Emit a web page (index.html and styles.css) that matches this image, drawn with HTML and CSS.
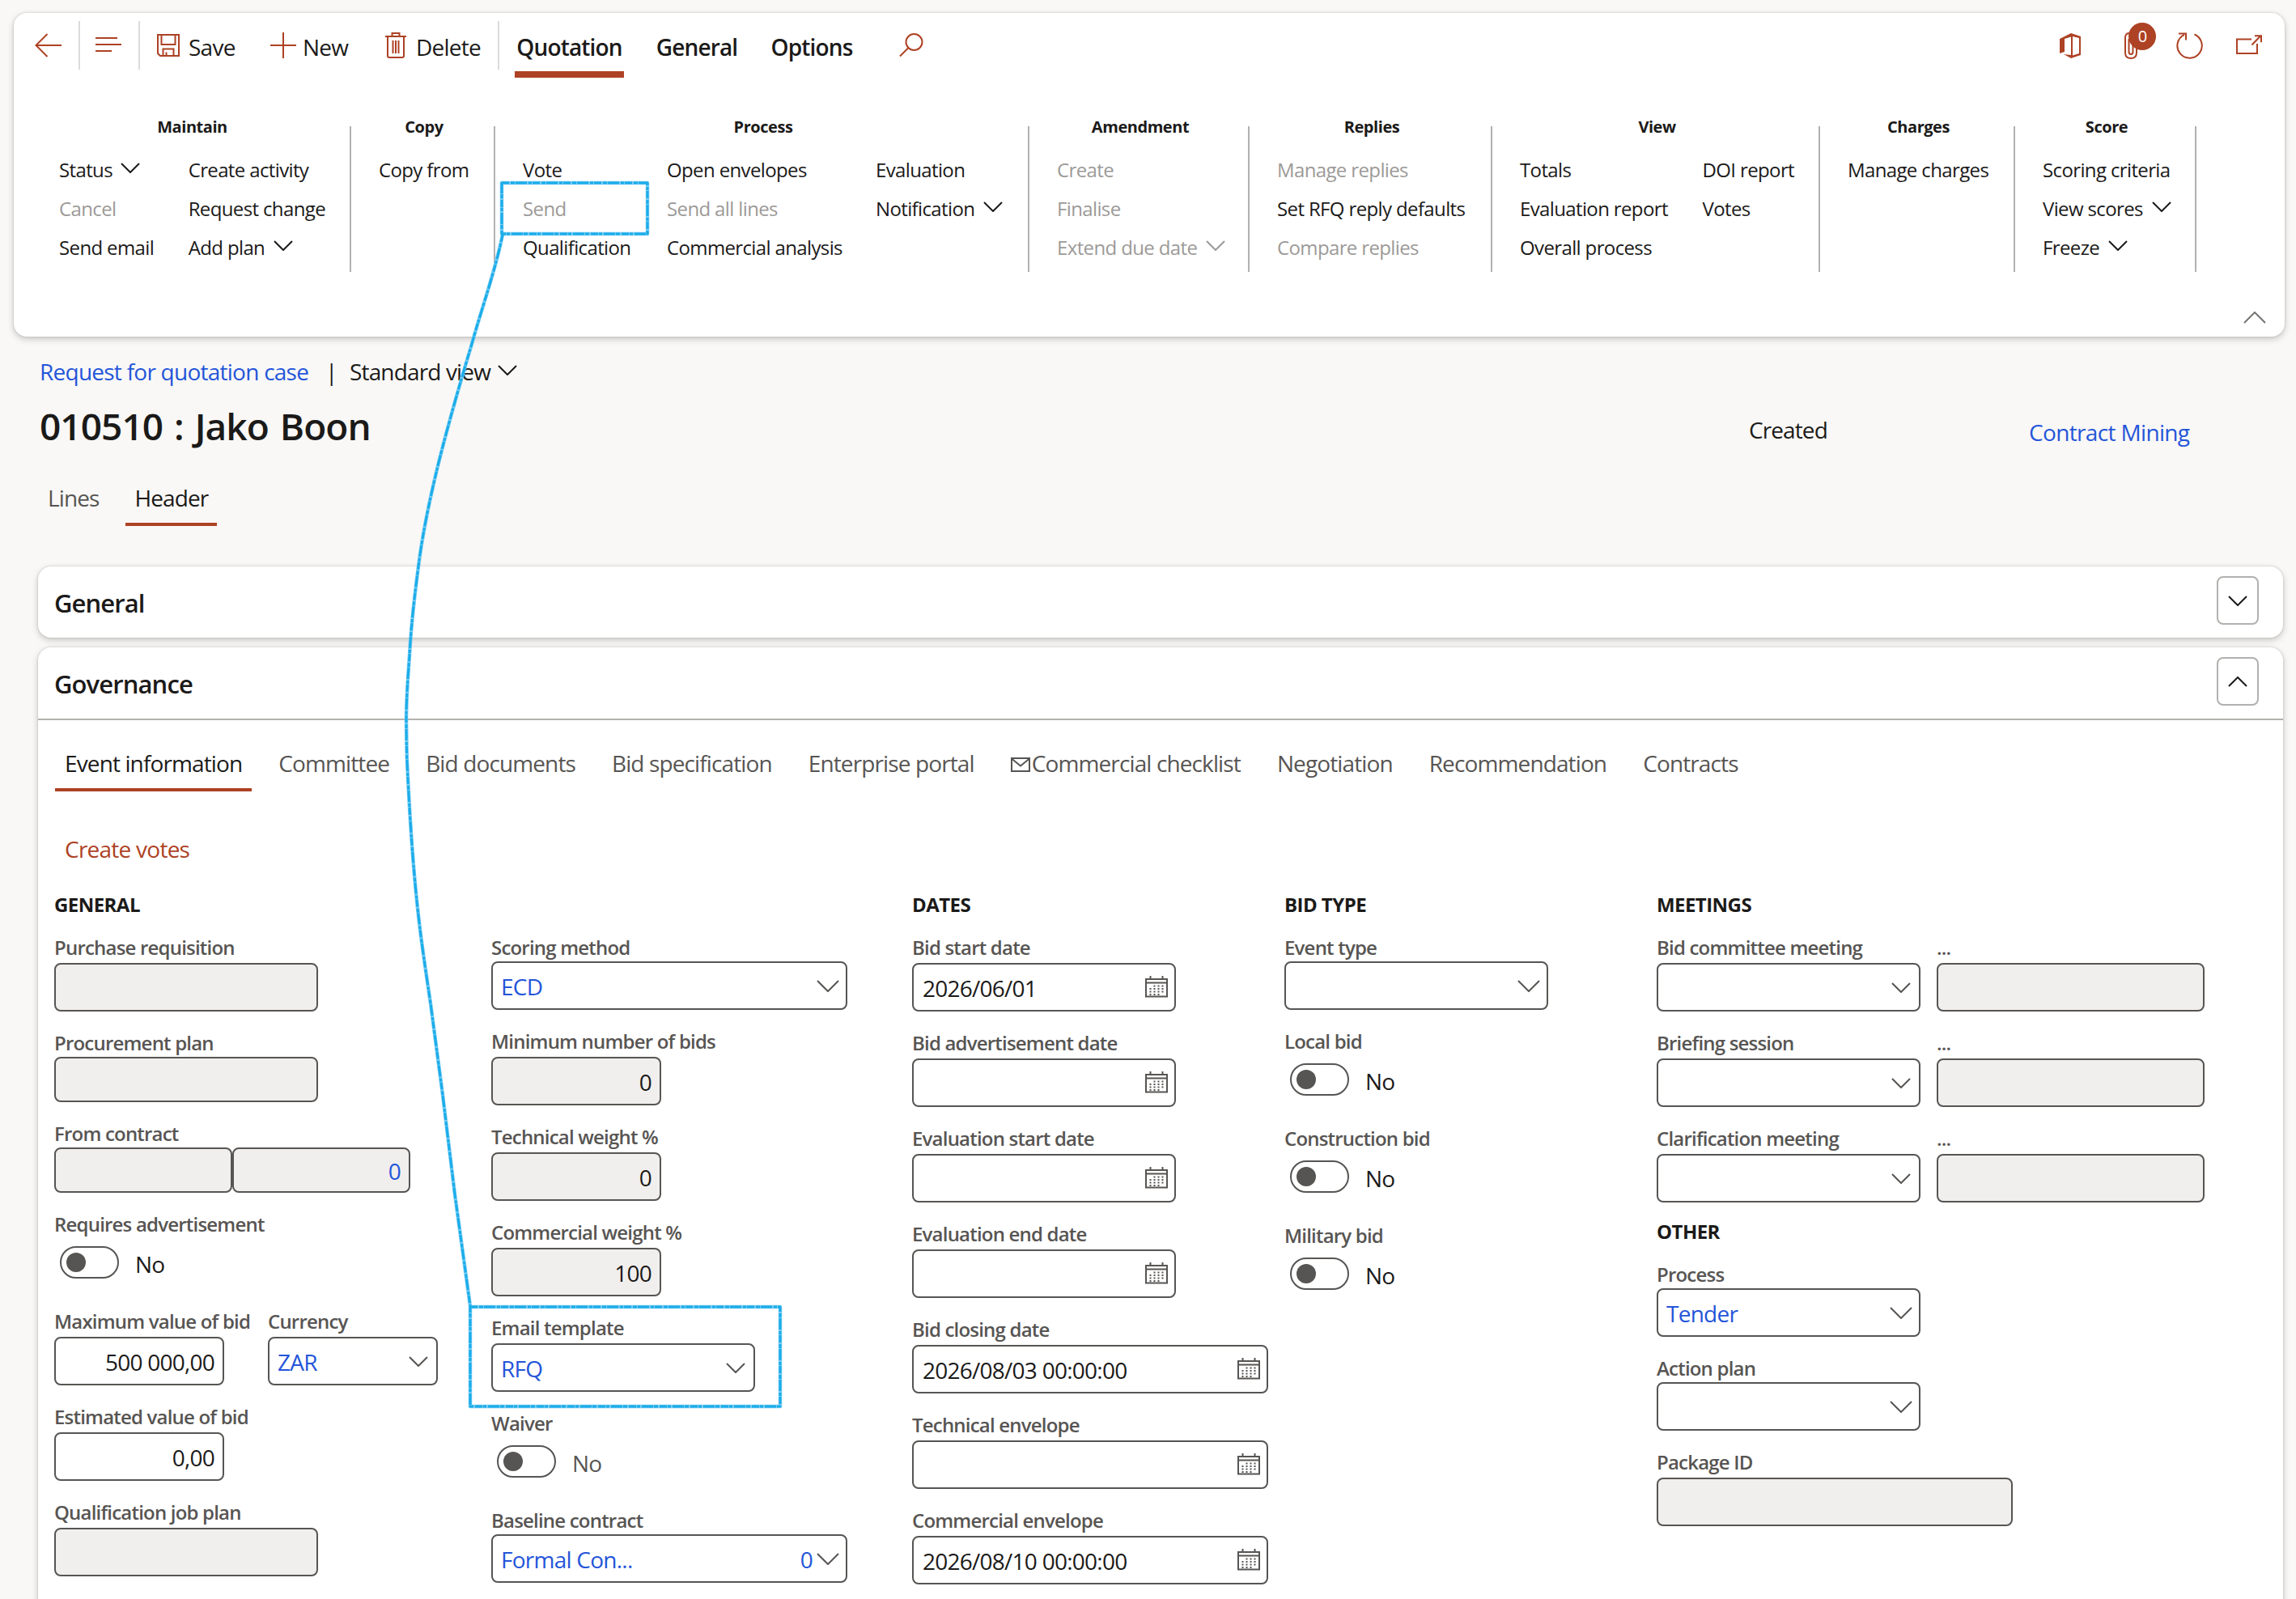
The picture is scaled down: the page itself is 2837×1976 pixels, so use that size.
FILE: index.html
```html
<!DOCTYPE html>
<html lang="en">
<head>
<meta charset="utf-8">
<title>Request for quotation case</title>
<link rel="stylesheet" href="styles.css">
</head>
<body>
<svg class="defs" aria-hidden="true">
  <symbol id="down" viewBox="0 0 24 13"><path d="M1 1l11 11L23 1"/></symbol>
  <symbol id="down-lg" viewBox="0 0 28 15"><path d="M1 1l13 13L27 1"/></symbol>
  <symbol id="up" viewBox="0 0 28 15"><path d="M1 14L14 1l13 13"/></symbol>
  <symbol id="cal" viewBox="0 0 28 27">
    <path d="M1 4h26v21.500H1zM1 8.500h26M6.500 0v5M21.500 0v5"/>
    <path class="dots" d="M10.500 12.500h14M5.500 16h19M5.500 19.500h19M5.500 23h14"/>
  </symbol>
  <g id="strokes">
    <path d="M620 226H800V289H620Z"/>
    <path d="M581 1615H964V1738H581Z"/>
    <path d="M621 290C612 335 596 378 583 425C568 475 552 530 539 584C530 622 522 660 517 700C512 738 508 772 506 810C504 838 502 862 502 890C502 920 503 950 505 980C508 1035 512 1090 518 1140C522 1174 527 1206 532 1240L547 1353C552 1394 557 1435 562 1476L581 1614"/>
  </g>
</svg>

<header class="pane">
  <div class="toolbar">
    <a class="cmd back"><svg class="ic" width="34" height="30" viewBox="0 0 34 30"><path d="M15.500 1L1.500 15l14 14M1.500 15H33"/></svg></a>
    <span class="sep"></span>
    <a class="cmd menu"><svg class="ic" width="32" height="20" viewBox="0 0 32 20"><path d="M0 1h27M0 9h32M0 17h20"/></svg></a>
    <span class="sep"></span>
    <a class="cmd save"><svg class="ic" width="28" height="28" viewBox="0 0 28 28"><path d="M1 1h26v26H4l-3-3zM5.500 1v12h17V1M7.500 27v-8.500h13V27M11.500 27v-4.500"/></svg><span>Save</span></a>
    <a class="cmd new"><svg class="ic" width="32" height="32" viewBox="0 0 32 32"><path d="M16 0v32M0 16h32"/></svg><span>New</span></a>
    <a class="cmd delete"><svg class="ic" width="26" height="32" viewBox="0 0 26 32"><path d="M0 5h26M8.500 5V1h9v4M3 5v24q0 2 2 2h16q2 0 2-2V5M9.500 10v16M13 10v16M16.500 10v16"/></svg><span>Delete</span></a>
    <span class="sep"></span>
    <nav class="pane-tabs">
      <a class="ptab on"><span>Quotation</span></a>
      <a class="ptab t2"><span>General</span></a>
      <a class="ptab t3"><span>Options</span></a>
    </nav>
    <svg class="ic search" width="30" height="30" viewBox="0 0 30 30"><circle cx="18.500" cy="11" r="10"/><path d="M11.500 18L1 28.500"/></svg>
    <div class="tools">
      <svg class="ic office" width="27" height="31" viewBox="0 0 27 31"><path class="solid" d="M0 7L14 0l12 4v23l-12 4-9-5 9 1V4.500L6 7v16l-6 2zM16 4v23.500l8-2.500V6z" fill-rule="evenodd"/></svg>
      <span class="attach"><svg class="ic" width="18" height="33" viewBox="0 0 18 33"><path d="M5.500 8v16q0 3 2.500 3t2.500-3V6q0-5-4.500-5T1 6v19q0 7 7 7t7-7V8"/></svg><b>0</b></span>
      <svg class="ic refresh" width="33" height="33" viewBox="0 0 33 33"><path d="M22.500 2.500A15.200 15.200 0 1 1 10 2.800M3 1.500h9v8"/></svg>
      <svg class="ic popout" width="32" height="24" viewBox="0 0 32 24"><path d="M19 5.500H1V23h25V11M19.500 12.500L30 1.500M23 1.200h8v8"/></svg>
    </div>
  </div>

  <div class="ribbon">
    <section class="group g1"><h4>Maintain</h4><div class="cols">
      <ul><li>Status<svg class="chev"><use href="#down"/></svg></li><li class="off">Cancel</li><li>Send email</li></ul>
      <ul><li>Create activity</li><li>Request change</li><li>Add plan<svg class="chev"><use href="#down"/></svg></li></ul></div></section>
    <i class="rule"></i>
    <section class="group g2"><h4>Copy</h4><div class="cols"><ul><li>Copy from</li></ul></div></section>
    <i class="rule"></i>
    <section class="group g3"><h4>Process</h4><div class="cols">
      <ul><li>Vote</li><li class="off">Send</li><li>Qualification</li></ul>
      <ul><li>Open envelopes</li><li class="off">Send all lines</li><li>Commercial analysis</li></ul>
      <ul><li>Evaluation</li><li>Notification<svg class="chev"><use href="#down"/></svg></li></ul></div></section>
    <i class="rule"></i>
    <section class="group g4"><h4>Amendment</h4><div class="cols">
      <ul><li class="off">Create</li><li class="off">Finalise</li><li class="off">Extend due date<svg class="chev"><use href="#down"/></svg></li></ul></div></section>
    <i class="rule"></i>
    <section class="group g5"><h4>Replies</h4><div class="cols">
      <ul><li class="off">Manage replies</li><li>Set RFQ reply defaults</li><li class="off">Compare replies</li></ul></div></section>
    <i class="rule"></i>
    <section class="group g6"><h4>View</h4><div class="cols">
      <ul><li>Totals</li><li>Evaluation report</li><li>Overall process</li></ul>
      <ul><li>DOI report</li><li>Votes</li></ul></div></section>
    <i class="rule"></i>
    <section class="group g7"><h4>Charges</h4><div class="cols"><ul><li>Manage charges</li></ul></div></section>
    <i class="rule"></i>
    <section class="group g8"><h4>Score</h4><div class="cols">
      <ul><li>Scoring criteria</li><li>View scores<svg class="chev"><use href="#down"/></svg></li><li>Freeze<svg class="chev"><use href="#down"/></svg></li></ul></div></section>
    <i class="rule"></i>
  </div>
  <div class="pane-foot"><svg class="chev-lg"><use href="#up"/></svg></div>
</header>

<main>
  <div class="crumbs"><a>Request for quotation case</a><span class="bar">|</span><span class="view">Standard view</span><svg class="chev"><use href="#down"/></svg></div>
  <div class="title-row"><h1>010510 : Jako Boon</h1><span class="status">Created</span><a class="category">Contract Mining</a></div>
  <nav class="page-tabs"><a>Lines</a><a class="on">Header</a></nav>

  <section class="card general">
    <div class="card-head"><h2>General</h2><button><svg class="chev"><use href="#down"/></svg></button></div>
  </section>

  <section class="card governance">
    <div class="card-head"><h2>Governance</h2><button><svg class="chev flip"><use href="#down"/></svg></button></div>
    <nav class="tabs">
      <a class="on">Event information</a><a>Committee</a><a>Bid documents</a><a>Bid specification</a><a>Enterprise portal</a><a class="mail"><svg width="24" height="18" viewBox="0 0 24 18"><path d="M1 1h22v16H1zM1 1.500l11 9 11-9"/></svg>Commercial checklist</a><a>Negotiation</a><a>Recommendation</a><a>Contracts</a>
    </nav>
    <a class="create">Create votes</a>

    <div class="form">
      <div class="col">
        <h3>GENERAL</h3>
        <div class="field"><label>Purchase requisition</label><div class="box ro"></div></div>
        <div class="field tight"><label>Procurement plan</label><div class="box ro short"></div></div>
        <div class="field tight"><label>From contract</label><div class="pair"><div class="box ro short half"></div><div class="box ro short half num link">0</div></div></div>
        <div class="field switch"><label>Requires advertisement</label><div class="toggle"><i></i><span>No</span></div></div>
        <div class="row two">
          <div class="field"><label>Maximum value of bid</label><div class="box sm num">500 000,00</div></div>
          <div class="field"><label>Currency</label><div class="box sm link">ZAR<svg class="chev"><use href="#down"/></svg></div></div>
        </div>
        <div class="field"><label>Estimated value of bid</label><div class="box sm num">0,00</div></div>
        <div class="field"><label>Qualification job plan</label><div class="box ro"></div></div>
      </div>

      <div class="col">
        <h3></h3>
        <div class="field tight"><label>Scoring method</label><div class="box lg link">ECD<svg class="chev-lg"><use href="#down-lg"/></svg></div></div>
        <div class="field"><label>Minimum number of bids</label><div class="box ro sm num">0</div></div>
        <div class="field"><label>Technical weight %</label><div class="box ro sm num">0</div></div>
        <div class="field"><label>Commercial weight %</label><div class="box ro sm num">100</div></div>
        <div class="field"><label>Email template</label><div class="box link">RFQ<svg class="chev"><use href="#down"/></svg></div></div>
        <div class="field switch dim"><label>Waiver</label><div class="toggle"><i></i><span>No</span></div></div>
        <div class="field tight"><label>Baseline contract</label><div class="box lg link">Formal Con...<span class="zero">0</span><svg class="chev-lg after"><use href="#down-lg"/></svg></div></div>
      </div>

      <div class="col">
        <h3>DATES</h3>
        <div class="field"><label>Bid start date</label><div class="box">2026/06/01<svg class="cal"><use href="#cal"/></svg></div></div>
        <div class="field"><label>Bid advertisement date</label><div class="box"><svg class="cal"><use href="#cal"/></svg></div></div>
        <div class="field"><label>Evaluation start date</label><div class="box"><svg class="cal"><use href="#cal"/></svg></div></div>
        <div class="field"><label>Evaluation end date</label><div class="box"><svg class="cal"><use href="#cal"/></svg></div></div>
        <div class="field"><label>Bid closing date</label><div class="box lg">2026/08/03 00:00:00<svg class="cal"><use href="#cal"/></svg></div></div>
        <div class="field"><label>Technical envelope</label><div class="box lg"><svg class="cal"><use href="#cal"/></svg></div></div>
        <div class="field"><label>Commercial envelope</label><div class="box lg">2026/08/10 00:00:00<svg class="cal"><use href="#cal"/></svg></div></div>
      </div>

      <div class="col">
        <h3>BID TYPE</h3>
        <div class="field tight"><label>Event type</label><div class="box"><svg class="chev-lg"><use href="#down-lg"/></svg></div></div>
        <div class="field switch"><label>Local bid</label><div class="toggle"><i></i><span>No</span></div></div>
        <div class="field switch"><label>Construction bid</label><div class="toggle"><i></i><span>No</span></div></div>
        <div class="field switch"><label>Military bid</label><div class="toggle"><i></i><span>No</span></div></div>
      </div>

      <div class="col">
        <h3>MEETINGS</h3>
        <div class="row"><div class="field"><label>Bid committee meeting</label><div class="box"><svg class="chev"><use href="#down"/></svg></div></div><div class="field"><label>...</label><div class="box ro note"></div></div></div>
        <div class="row"><div class="field"><label>Briefing session</label><div class="box"><svg class="chev"><use href="#down"/></svg></div></div><div class="field"><label>...</label><div class="box ro note"></div></div></div>
        <div class="row"><div class="field"><label>Clarification meeting</label><div class="box"><svg class="chev"><use href="#down"/></svg></div></div><div class="field"><label>...</label><div class="box ro note"></div></div></div>
        <h3 class="other">OTHER</h3>
        <div class="field tight"><label>Process</label><div class="box link">Tender<svg class="chev-lg"><use href="#down-lg"/></svg></div></div>
        <div class="field tight"><label>Action plan</label><div class="box"><svg class="chev-lg"><use href="#down-lg"/></svg></div></div>
        <div class="field"><label>Package ID</label><div class="box ro lg"></div></div>
      </div>
    </div>
  </section>
</main>

<svg class="markup" width="2837" height="1976" viewBox="0 0 2837 1976">
  <use href="#strokes" class="wash"/>
  <use href="#strokes" class="grain"/>
</svg>
</body>
</html>
```
FILE: styles.css
```css
* { box-sizing: border-box; }
html, body { margin: 0; height: 1976px; overflow: hidden; }
body {
  position: relative;
  background: #f9f8f6;
  color: #1b1a19;
  font-family: "Open Sans", "Noto Sans", sans-serif;
  font-size: 28px;
  line-height: 40px;
  letter-spacing: -0.75px;
  padding: 16px 0 0 17px;
}
h1, h2, h3, h4, ul { margin: 0; padding: 0; list-style: none; }
svg { fill: none; flex: none; stroke-width: 2; }
.defs { position: absolute; width: 0; height: 0; }
.dots { stroke-dasharray: 2 3; }
a, .link { color: #2455d9; }
.chev { width: 24px; height: 13px; stroke: currentColor; }
.chev-lg { width: 28px; height: 15px; stroke: currentColor; }
.flip { transform: scaleY(-1); }

/* action pane */
.pane {
  width: 2806px; height: 400px;
  background: #fff; border-radius: 16px;
  box-shadow: 0 3px 8px rgba(0,0,0,.2), 0 0 3px rgba(0,0,0,.16);
}
.toolbar { display: flex; height: 80px; color: #1b1a19; }
.toolbar a { color: inherit; }
.ic { stroke: #ad4224; }
.solid { fill: #ad4224; stroke: none; }
.sep { width: 2px; height: 60px; margin-top: 10px; background: #dcdbda; }
.cmd { display: flex; align-items: center; height: 80px; }
.cmd span, .ptab span { padding-top: 4px; line-height: 76px; }
.back { width: 80px; padding-left: 26px; }
.menu { width: 72px; padding-left: 19px; }
.save { width: 161px; padding-left: 21px; gap: 11px; }
.new { width: 142px; gap: 8px; }
.delete { width: 139px; gap: 12px; }
.pane-tabs { display: flex; margin-left: 19px; font-weight: 600; letter-spacing: -0.85px; }
.ptab { height: 80px; display: flex; justify-content: center; }
.ptab.on { width: 135px; border-bottom: 8px solid #ad4224; }
.t2 { width: 110px; margin-left: 35px; }
.t3 { width: 110px; margin-left: 32px; }
.search { margin: 25px 0 0 53px; }
.tools { display: flex; margin-left: auto; padding-right: 28px; }
.office { margin: 25px 53px 0 0; }
.attach { position: relative; width: 64px; padding-top: 24px; line-height: 0; }
.attach b {
  position: absolute; left: 5px; top: 12px; width: 34px; height: 34px; border-radius: 50%;
  background: #ad4224; color: #fff; font-size: 20px; line-height: 34px; font-weight: 400; text-align: center;
}
.refresh { margin: 24px 41px 0 0; }
.popout { margin-top: 27px; }

.ribbon { display: flex; padding-top: 46px; height: 274px; font-size: 24px; letter-spacing: -0.63px; }
.rule { width: 2px; height: 180px; margin-top: 14px; background: #b3b1b0; }
.group { padding: 0 30px 0 34px; }
.group h4 { font-size: 20px; line-height: 30px; font-weight: 700; text-align: center; letter-spacing: -0.45px; }
.cols { display: flex; margin-top: 14px; }
.cols li { display: flex; align-items: center; line-height: 48px; white-space: nowrap; }
.cols .chev { margin: -6px 0 0 11px; }
.off { color: #9c9a98; }
.g1 { width: 415px; padding-left: 56px; }
.g1 ul:first-child { width: 162px; }
.g1 li:first-child .chev { margin-left: 10px; }
.g2 { width: 176px; }
.g3 { width: 658px; }
.g3 ul:first-child { width: 178px; }
.g3 ul:nth-child(2) { width: 258px; }
.g4 { width: 270px; }
.g5 { width: 298px; }
.g6 { width: 403px; }
.g6 ul:first-child { width: 226px; }
.g7 { width: 239px; }
.g8 { width: 222px; }
.pane-foot { display: flex; justify-content: flex-end; padding: 15px 23px 0 0; color: #777573; }

/* page head */
.crumbs { display: flex; align-items: center; height: 40px; margin: 23px 0 0 32px; }
.crumbs a { width: 353px; }
.crumbs .bar { width: 30px; }
.crumbs .view { width: 183px; letter-spacing: -0.85px; }
.crumbs svg { margin-top: -4px; }
.title-row { display: flex; height: 66px; margin: 16px 0 0 32px; align-items: flex-start; }
h1 { width: 2112px; margin-top: -2px; font-size: 46px; line-height: 66px; font-weight: 600; letter-spacing: -0.95px; word-spacing: 3px; }
.status { width: 346px; padding-top: 16px; letter-spacing: -0.9px; }
.category { padding-top: 19px; letter-spacing: -0.65px; }
.page-tabs { display: flex; margin: 34px 0 0 31px; gap: 22px; letter-spacing: -0.9px; }
.page-tabs a { padding: 0 11px 11px; color: #575553; border-bottom: 4px solid transparent; }
.page-tabs .on, .tabs .on { color: #1b1a19; border-color: #ad4224; }

/* cards */
.card {
  width: 2774px; margin-left: 30px; background: #fff; border-radius: 16px;
  box-shadow: 0 3px 8px rgba(0,0,0,.2), 0 0 3px rgba(0,0,0,.16);
}
.general { height: 88px; margin-top: 50px; }
.governance { height: 1240px; margin-top: 12px; }
.card-head { display: flex; justify-content: space-between; height: 88px; padding: 12px 30px 0 20px; }
.card-head h2 { font-size: 31px; line-height: 66px; font-weight: 600; letter-spacing: -0.9px; }
.card-head button {
  width: 52px; height: 60px; padding: 0; border: 2px solid #b3b1af; border-radius: 8px; background: #fff;
  display: flex; align-items: center; justify-content: center; color: #1b1a19;
}
.tabs { display: flex; gap: 21px; padding: 33px 0 0 21px; border-top: 2px solid #b3b1af; letter-spacing: -0.88px; }
.tabs a { padding: 0 12px 11px; color: #575553; border-bottom: 4px solid transparent; white-space: nowrap; }
.mail svg { width: 24px; height: 18px; margin-right: 2px; stroke: currentColor; vertical-align: 0; }
.create { display: block; margin: 51px 0 0 33px; color: #ad4224; }

/* form */
.form { display: grid; grid-template-columns: 540px 520px 460px 460px auto; padding: 33px 0 0 20px; }
h3 { height: 32px; margin-bottom: 21px; font-size: 24px; line-height: 32px; font-weight: 700; letter-spacing: -0.55px; }
.other { margin-top: -3px; }
.field { margin-bottom: 23px; }
.field label { display: block; margin-bottom: 3px; color: #575553; font-size: 24px; line-height: 32px; font-weight: 600; letter-spacing: -0.8px; white-space: nowrap; }
.tight label { margin-bottom: 1px; }
.switch { margin-bottom: 37px; }
.switch label { margin-bottom: 11px; }
.row { display: flex; gap: 20px; }
.two { gap: 54px; }
.two .field { width: 210px; }
.pair { display: flex; }
.box {
  display: flex; align-items: center; width: 326px; height: 60px; padding: 2px 10px 0 11px;
  border: 2px solid #575553; border-radius: 8px; background: #fff; line-height: 54px; white-space: nowrap;
}
.box.link { padding-left: 10px; }
.box svg { margin: -2px 0 0 auto; stroke: #575553; }
.box .chev-lg { margin-right: -2px; }
.box .cal { width: 28px; height: 27px; margin: -4px -2px 0 auto; }
.ro { background: #f1efed; }
.short { height: 56px; padding-top: 1px; }
.half { width: 220px; }
.sm { width: 210px; }
.lg { width: 440px; }
.note { width: 331px; }
.num { justify-content: flex-end; }
.zero { margin-left: auto; }
.box .after { margin-left: 5px; }
.toggle { display: flex; height: 40px; padding-left: 7px; }
.toggle i { width: 73px; height: 40px; padding: 6px; border: 2px solid #575553; border-radius: 20px; }
.toggle i::before { content: ""; display: block; width: 24px; height: 24px; border-radius: 50%; background: #575553; }
.toggle span { margin-left: 20px; line-height: 44px; }
.dim span { color: #575553; }

/* hand-drawn annotation lying over the page */
.markup { position: absolute; left: 0; top: 0; stroke-linejoin: round; }
.wash { stroke: #79cdf4; stroke-width: 4.500; }
.grain { stroke: #1aace9; stroke-width: 3; stroke-dasharray: 9 2 5 1 14 2 4 1; }
```
